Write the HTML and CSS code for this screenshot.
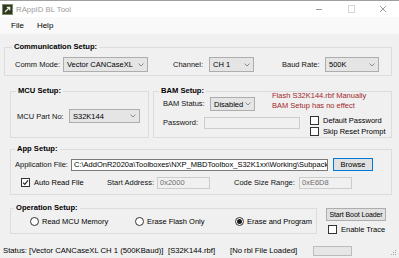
FILE: index.html
```html
<!DOCTYPE html>
<html>
<head>
<meta charset="utf-8">
<title>RAppID BL Tool</title>
<link rel="stylesheet" href="styles.css">
</head>
<body>
<div class="window">
  <div class="titlebar">
    <svg class="app-icon" width="11" height="11" viewBox="0 0 11 11">
      <rect x="0.5" y="0.5" width="10" height="10" fill="#2f3a1c" stroke="#7d8a6a"/>
      <path d="M3 8 L7.5 3.5 M4.8 3.3 H7.7 V6.2" stroke="#e8e8e8" stroke-width="1.3" fill="none"/>
    </svg>
    <span class="title">RAppID BL Tool</span>
    <div class="controls">
      <span class="ctl"><svg width="8" height="8" viewBox="0 0 8 8"><path d="M1 4.5 H7" stroke="#9a9a9a" stroke-width="1"/></svg></span>
      <span class="ctl"><svg width="8" height="8" viewBox="0 0 8 8"><rect x="1.5" y="0.5" width="6" height="7" fill="none" stroke="#d6d6d6"/></svg></span>
      <span class="ctl"><svg width="8" height="8" viewBox="0 0 8 8"><path d="M1 1 L7 7 M7 1 L1 7" stroke="#9a9a9a" stroke-width="1"/></svg></span>
    </div>
  </div>
  <div class="menubar">
    <span class="menu">File</span>
    <span class="menu">Help</span>
  </div>
  <main class="content">
    <fieldset class="group comm">
      <legend>Communication Setup:</legend>
      <div class="row h15">
        <span class="lbl l-comm">Comm Mode:</span>
        <div class="combo c-comm"><span>Vector CANCaseXL</span><svg class="arr" width="6" height="4" viewBox="0 0 6 4"><path d="M0.5 0.5 L3 3 L5.5 0.5" stroke="#8a8a8a" fill="none"/></svg></div>
        <span class="lbl l-chan">Channel:</span>
        <div class="combo c-chan"><span>CH 1</span><svg class="arr" width="6" height="4" viewBox="0 0 6 4"><path d="M0.5 0.5 L3 3 L5.5 0.5" stroke="#8a8a8a" fill="none"/></svg></div>
        <span class="lbl l-baud">Baud Rate:</span>
        <div class="combo c-baud"><span>500K</span><svg class="arr" width="6" height="4" viewBox="0 0 6 4"><path d="M0.5 0.5 L3 3 L5.5 0.5" stroke="#8a8a8a" fill="none"/></svg></div>
      </div>
    </fieldset>

    <div class="row2">
      <fieldset class="group mcu">
        <legend>MCU Setup:</legend>
        <div class="row h14">
          <span class="lbl l-mcu">MCU Part No:</span>
          <div class="combo c-mcu"><span>S32K144</span><svg class="arr" width="6" height="4" viewBox="0 0 6 4"><path d="M0.5 0.5 L3 3 L5.5 0.5" stroke="#8a8a8a" fill="none"/></svg></div>
        </div>
      </fieldset>
      <fieldset class="group bam">
        <legend>BAM Setup:</legend>
        <div class="bam-a">
          <span class="lbl l-bams">BAM Status:</span>
          <div class="combo c-bam"><span>Disabled</span><svg class="arr" width="6" height="4" viewBox="0 0 6 4"><path d="M0.5 0.5 L3 3 L5.5 0.5" stroke="#8a8a8a" fill="none"/></svg></div>
          <div class="warn">Flash S32K144.rbf Manually<br>BAM Setup has no effect</div>
        </div>
        <div class="bam-b">
          <span class="lbl l-pass">Password:</span>
          <div class="tb disabled t-pass"></div>
          <div class="checks">
            <label class="chk"><span class="cb"></span><span>Default Password</span></label>
            <label class="chk"><span class="cb"></span><span>Skip Reset Prompt</span></label>
          </div>
        </div>
      </fieldset>
    </div>

    <fieldset class="group app">
      <legend>App Setup:</legend>
      <div class="row h13">
        <span class="lbl l-app">Application File:</span>
        <div class="tb t-app">C:\AddOnR2020a\Toolboxes\NXP_MBDToolbox_S32K1xx\Working\Subpack</div>
        <div class="btn browse">Browse</div>
      </div>
      <div class="row h13 mt5">
        <label class="chk auto"><span class="cb"><svg width="7" height="7" viewBox="0 0 7 7"><path d="M1 3.6 L2.8 5.4 L6 1.4" stroke="#222" stroke-width="1.1" fill="none"/></svg></span><span>Auto Read File</span></label>
        <span class="lbl l-start">Start Address:</span>
        <div class="tb disabled t-addr">0x2000</div>
        <span class="lbl l-size">Code Size Range:</span>
        <div class="tb disabled t-addr">0xE6D8</div>
      </div>
    </fieldset>

    <div class="oprow">
      <fieldset class="group op">
        <legend>Operation Setup:</legend>
        <div class="row h10">
          <label class="radio r1"><span class="rb"></span><span>Read MCU Memory</span></label>
          <label class="radio r2"><span class="rb"></span><span>Erase Flash Only</span></label>
          <label class="radio r3"><span class="rb on"></span><span>Erase and Program</span></label>
        </div>
      </fieldset>
      <div class="side">
        <div class="btn start">Start Boot Loader</div>
        <label class="chk trace"><span class="cb"></span><span>Enable Trace</span></label>
      </div>
    </div>
  </main>
  <div class="statusbar">
    <span class="st st1">Status: [Vector CANCaseXL CH 1 (500KBaud)]</span>
    <span class="st st2">[S32K144.rbf]</span>
    <span class="st st3">[No rbl File Loaded]</span>
    <span class="progress"></span>
    <svg class="grip" width="7" height="7" viewBox="0 0 7 7">
      <rect x="5" y="1" width="1" height="1" fill="#a8a8a8"/>
      <rect x="3" y="3" width="1" height="1" fill="#a8a8a8"/>
      <rect x="5" y="3" width="1" height="1" fill="#a8a8a8"/>
      <rect x="1" y="5" width="1" height="1" fill="#a8a8a8"/>
      <rect x="3" y="5" width="1" height="1" fill="#a8a8a8"/>
      <rect x="5" y="5" width="1" height="1" fill="#a8a8a8"/>
    </svg>
  </div>
</div>
</body>
</html>
```
FILE: styles.css
```css
* { box-sizing: border-box; }
html, body { margin: 0; padding: 0; }
body {
  width: 399px;
  height: 258px;
  overflow: hidden;
  background: #f0f0f0;
  font-family: "Liberation Sans", Arial, sans-serif;
  font-size: 7.5px;
  color: #000;
}
.window {
  width: 399px;
  height: 258px;
  display: flex;
  flex-direction: column;
  border-top: 1px solid #a0a0a0;
}

/* title bar */
.titlebar {
  height: 16px;
  flex: none;
  background: #fff;
  display: flex;
  align-items: center;
}
.app-icon { margin-left: 2px; flex: none; }
.title { margin-left: 3px; color: #9c9c9c; font-size: 7.8px; }
.controls { margin-left: auto; display: flex; height: 16px; }
.ctl { width: 32px; display: flex; align-items: center; justify-content: center; }

/* menu */
.menubar {
  height: 17px;
  flex: none;
  background: #f9f9f9;
  display: flex;
  align-items: center;
  padding-left: 11px;
  gap: 13px;
  font-size: 8px;
}

.content {
  display: flex;
  flex-direction: column;
  padding-top: 8px;
}

/* group boxes */
.group {
  margin: 0;
  border: 1px solid #dcdcdc;
  min-width: 0;
}
.group legend {
  font-weight: bold;
  font-size: 7.6px;
  line-height: 10px;
  padding: 0 2px;
  margin-left: -3px;
}
.row { display: flex; align-items: center; }
.h15 { height: 15px; }
.h14 { height: 14px; }
.h13 { height: 13px; }
.h10 { height: 10px; }
.mt5 { margin-top: 5px; }
.lbl { flex: none; white-space: nowrap; color: #111; }

.combo {
  flex: none;
  height: 15px;
  background: #e5e5e5;
  border: 1px solid #adadad;
  display: flex;
  align-items: center;
  justify-content: space-between;
  padding: 0 3px 0 3px;
  white-space: nowrap;
}
.arr { flex: none; }

.tb {
  flex: none;
  height: 12px;
  border: 1px solid #7a7a7a;
  background: #fff;
  padding: 0 2px;
  line-height: 10px;
  white-space: nowrap;
  overflow: hidden;
}
.tb.disabled { background: #f0f0f0; border-color: #cccccc; color: #6d6d6d; }

.btn {
  flex: none;
  background: #e1e1e1;
  border: 1px solid #adadad;
  display: flex;
  align-items: center;
  justify-content: center;
  white-space: nowrap;
}

.chk, .radio { display: flex; align-items: center; white-space: nowrap; }
.cb {
  width: 9px; height: 9px; flex: none;
  border: 1px solid #333;
  background: #fff;
  display: flex; align-items: center; justify-content: center;
  margin-right: 4px;
}
.rb {
  width: 9px; height: 9px; flex: none;
  border: 1px solid #333;
  border-radius: 50%;
  background: #fff;
  display: flex; align-items: center; justify-content: center;
  margin-right: 3px;
}
.rb.on::after {
  content: "";
  width: 5px; height: 5px;
  border-radius: 50%;
  background: #1a1a1a;
}

/* communication */
.comm { margin: 0 7px 0 4px; padding: 5px 0 3px 10px; }
.l-comm { width: 48px; }
.c-comm { width: 85px; }
.l-chan { width: 36px; margin-left: 25px; }
.c-chan { width: 45px; }
.l-baud { width: 43px; margin-left: 28px; }
.c-baud { width: 54px; }

/* mcu / bam */
.row2 { display: flex; gap: 4px; margin: 10px 7px 0 10px; }
.mcu { width: 139px; flex: none; padding: 13px 0 2px 6px; }
.mcu legend { margin-left: -1px; }
.l-mcu { width: 52px; }
.c-mcu { width: 71px; height: 14px; }
.bam { flex: 1; padding: 0 0 2px 9px; }
.bam legend { margin-left: -4px; }
.bam-a { display: flex; align-items: flex-end; margin-top: -5px; }
.l-bams { width: 47px; height: 14px; line-height: 14px; }
.c-bam { width: 45px; height: 14px; }
.warn { margin-left: 17px; line-height: 10px; color: #a3262a; font-size: 7.5px; }
.bam-b { display: flex; align-items: flex-start; margin-top: 5px; }
.l-pass { width: 41px; margin-top: 2px; }
.t-pass { width: 96px; margin-top: 1px; }
.checks { margin-left: 10px; display: flex; flex-direction: column; gap: 3px; }
.checks .chk { height: 8px; }

/* app */
.app { margin: 6px 7px 0 10px; padding: 4px 0 5px 4px; }
.app legend { margin-left: 0; }
.l-app { width: 56px; }
.t-app { width: 257px; text-overflow: clip; }
.browse { width: 40px; height: 13px; margin-left: 5px; border-color: #0078d7; }
.auto { width: 92px; padding-left: 6px; }
.l-start { width: 50px; }
.t-addr { width: 53px; }
.l-size { width: 65px; margin-left: 24px; }

/* operation */
.oprow { display: flex; margin: 8px 7px 0 10px; }
.op { width: 307px; flex: none; padding: 3px 0 6px 0; }
.op legend { margin-left: 3px; }
.r1 { margin-left: 19px; width: 105px; }
.r2 { width: 100px; }
.side { margin-left: 9px; margin-top: 5px; display: flex; flex-direction: column; align-items: flex-start; }
.start { width: 60px; height: 13px; font-size: 7px; letter-spacing: -0.1px; }
.trace { margin-top: 4px; margin-left: 2px; }

/* status bar */
.statusbar {
  margin-top: auto;
  height: 17px;
  flex: none;
  display: flex;
  align-items: center;
  padding-top: 2px;
  font-size: 7.7px;
}
.st { white-space: nowrap; flex: none; }
.st1 { margin-left: 3px; width: 165px; }
.st2 { width: 62px; }
.st3 { width: 83px; }
.progress { width: 39px; height: 10px; background: #e6e6e6; border: 1px solid #bcbcbc; flex: none; }
.grip { margin-left: auto; margin-right: 2px; margin-top: 4px; }
```
